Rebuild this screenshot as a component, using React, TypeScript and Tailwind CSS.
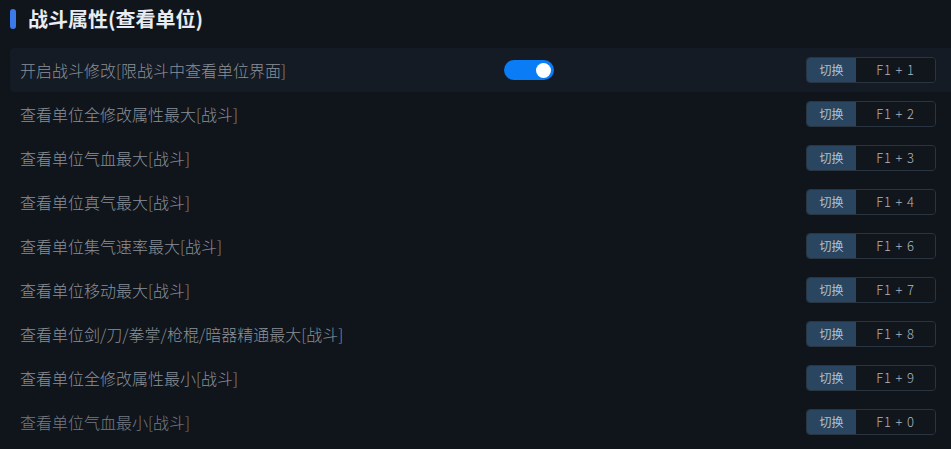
import React from "react";

const rows = [
  { label: "开启战斗修改[限战斗中查看单位界面]", key: "F1 + 1", toggle: true },
  { label: "查看单位全修改属性最大[战斗]", key: "F1 + 2" },
  { label: "查看单位气血最大[战斗]", key: "F1 + 3" },
  { label: "查看单位真气最大[战斗]", key: "F1 + 4" },
  { label: "查看单位集气速率最大[战斗]", key: "F1 + 6" },
  { label: "查看单位移动最大[战斗]", key: "F1 + 7" },
  { label: "查看单位剑/刀/拳掌/枪棍/暗器精通最大[战斗]", key: "F1 + 8" },
  { label: "查看单位全修改属性最小[战斗]", key: "F1 + 9" },
  { label: "查看单位气血最小[战斗]", key: "F1 + 0" },
];

export default function App() {
  return (
    <div
      className="w-[951px] h-[449px] overflow-hidden bg-[#10151c] pl-[10px]"
      style={{ fontFamily: '"Noto Sans CJK SC", "Noto Sans", sans-serif' }}
    >
      <div className="flex items-center h-[36px] pt-[1px]">
        <div className="w-[6px] h-[20px] rounded-[3px] bg-[#3b7ae8]" />
        <div className="ml-[12px] text-[20px] font-bold text-[#e8ecf2] leading-none">
          战斗属性(查看单位)
        </div>
      </div>
      <div className="mt-[12px] flex flex-col">
        {rows.map((r, i) => (
          <div
            key={i}
            className={`flex items-center h-[44px] pl-[10px] pr-[15px] rounded-l-[4px] ${
              i === 0 ? "bg-[#141b24]" : ""
            }`}
          >
            <div
              className={`w-[484px] text-[16px] font-light whitespace-nowrap ${
                i === rows.length - 1 ? "text-[#767b82]" : "text-[#8b9098]"
              }`}
            >
              {r.label}
            </div>
            <div className="flex-1">
              {r.toggle && (
                <div className="w-[50px] h-[20px] rounded-full bg-[#0a7cf5] flex items-center justify-end pr-[3px]">
                  <div className="w-[15px] h-[15px] rounded-full bg-white" />
                </div>
              )}
            </div>
            <div className="flex w-[130px] h-[26px] rounded-[4px] border border-[#2a3542] overflow-hidden text-[12px]">
              <div className="w-[49px] bg-[#294560] text-[#b4c0cc] flex items-center justify-center">
                切换
              </div>
              <div className="flex-1 bg-[#11161d] text-[#aeb6bf] flex items-center justify-center text-[13px] font-light tracking-[0.8px]">
                {r.key}
              </div>
            </div>
          </div>
        ))}
      </div>
    </div>
  );
}
